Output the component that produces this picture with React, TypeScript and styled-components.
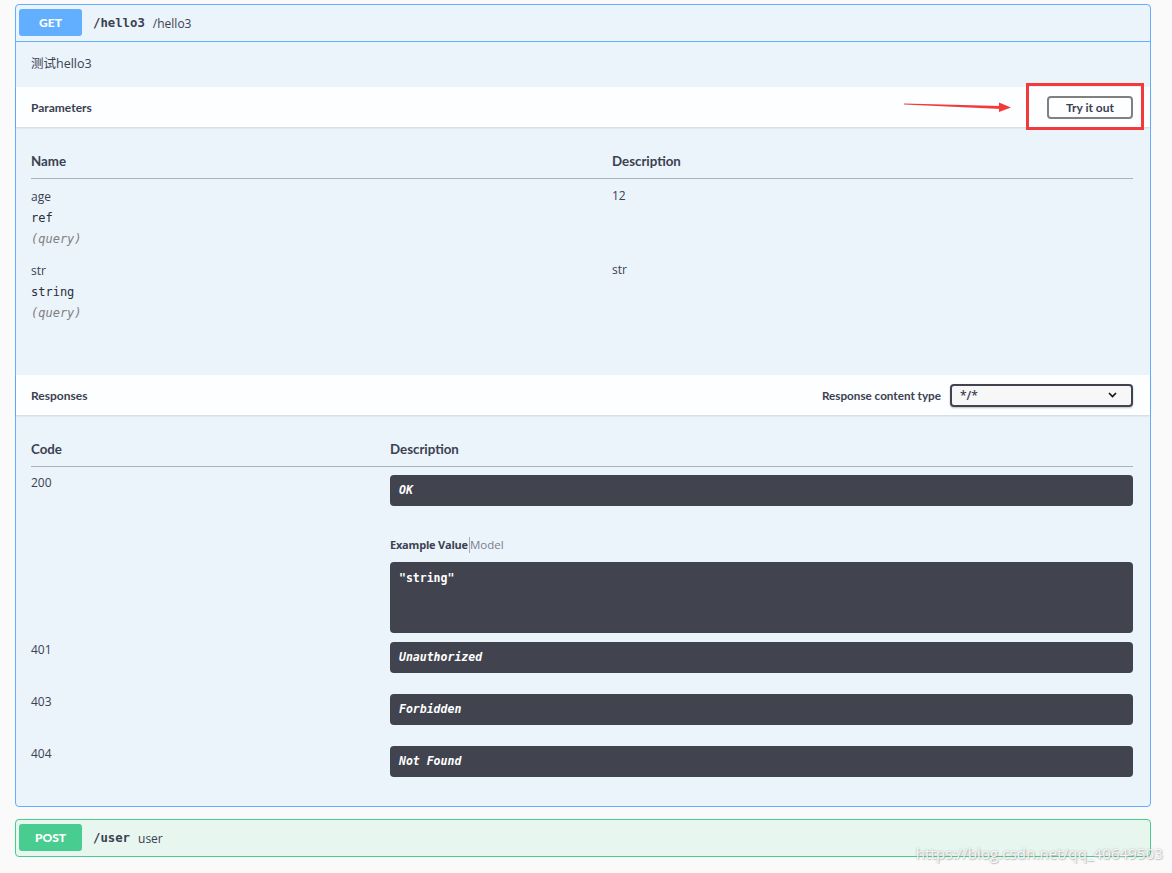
import React from 'react'
import styled, { createGlobalStyle } from 'styled-components'

const GlobalStyle = createGlobalStyle`
  html, body {
    margin: 0;
    padding: 0;
    background: #fafafa;
  }
  body {
    font-family: Lato, "Noto Sans", "Noto Sans CJK SC", sans-serif;
    color: #3b4151;
  }
`

const mono = `"DejaVu Sans Mono", "Liberation Mono", monospace`

const methods = {
  get: { border: '#61affe', bg: '#ebf3fb' },
  post: { border: '#49cc90', bg: '#e8f6f0' },
}

type Method = keyof typeof methods

const Page = styled.div`
  position: relative;
  height: 873px;
  padding: 4px 0 0 15px;
  box-sizing: border-box;
  width: 1172px;
`

const OpBlock = styled.div<{ $method: Method }>`
  width: 1136px;
  box-sizing: border-box;
  border: 1px solid ${(p) => methods[p.$method].border};
  border-radius: 4px;
  background: ${(p) => methods[p.$method].bg};
  margin-bottom: 12px;
`

const Summary = styled.div<{ $method: Method; $open?: boolean }>`
  display: flex;
  align-items: center;
  height: 36px;
  padding: 0 3px;
  border-bottom: ${(p) => (p.$open ? `1px solid ${methods[p.$method].border}` : 'none')};
`

const MethodBadge = styled.span<{ $method: Method }>`
  display: flex;
  align-items: center;
  justify-content: center;
  width: 63px;
  height: 27px;
  border-radius: 3px;
  background: ${(p) => methods[p.$method].border};
  color: #fff;
  font-size: 12px;
  font-weight: 900;
  margin-top: -1px;
`

const Path = styled.span`
  font-family: ${mono};
  font-size: 12.3px;
  font-weight: 600;
  color: #3b4151;
  margin-left: 11px;
`

const SummaryText = styled.span`
  font-family: "Open Sans", "Noto Sans", sans-serif;
  font-size: 12px;
  color: #3b4151;
  margin-left: 8px;
`

const Description = styled.div`
  height: 45px;
  box-sizing: border-box;
  padding: 0 0 4px 15px;
  display: flex;
  align-items: center;
  font-family: "Open Sans", "Noto Sans CJK SC", sans-serif;
  font-size: 12.5px;
`

const SectionHeader = styled.div`
  position: relative;
  display: flex;
  align-items: center;
  justify-content: space-between;
  height: 40px;
  padding: 0 17px 0 15px;
  background: rgba(255, 255, 255, 0.85);
  box-shadow: 0 1px 2px rgba(0, 0, 0, 0.12);
`

const SectionTitle = styled.h4`
  margin: 0;
  font-size: 12px;
  font-weight: 700;
  color: #3b4151;
`

const TryButton = styled.button`
  width: 86px;
  height: 23px;
  border: 2px solid #808080;
  border-radius: 4px;
  background: transparent;
  font-family: Lato, sans-serif;
  font-size: 12px;
  font-weight: 700;
  color: #3b4151;
  padding: 0;
`

const Highlight = styled.div`
  position: absolute;
  left: 1010px;
  top: -4px;
  width: 118px;
  height: 47px;
  box-sizing: border-box;
  border: 3px solid #f33a3a;
`

const Arrow = styled.svg`
  position: absolute;
  left: 888px;
  top: 14px;
`

const Section = styled.div<{ $top: number; $bottom: number }>`
  padding: ${(p) => p.$top}px 17px ${(p) => p.$bottom}px 15px;
`

const Table = styled.table`
  width: 100%;
  border-collapse: collapse;
`

const Th = styled.th<{ $width?: number }>`
  text-align: left;
  font-size: 13.3px;
  font-weight: 700;
  line-height: 16px;
  padding: 13px 0 9px;
  border-bottom: 1px solid rgba(59, 65, 81, 0.2);
  width: ${(p) => (p.$width ? `${p.$width}px` : 'auto')};
`

const Td = styled.td<{ $pad: string }>`
  vertical-align: top;
  padding: ${(p) => p.$pad};
  font-family: "Open Sans", "Noto Sans", sans-serif;
  font-size: 12px;
  line-height: 16px;
  color: #3b4151;
`

const ParamName = styled.div`
  font-weight: 400;
`

const ParamType = styled.div`
  font-family: ${mono};
  font-size: 12px;
  font-weight: 400;
  color: #2a2f3c;
  padding: 5px 0;
`

const ParamIn = styled.div`
  font-family: ${mono};
  font-size: 12px;
  font-style: italic;
  color: #808080;
`

const SelectBox = styled.div`
  display: flex;
  align-items: center;
  gap: 9px;
`

const SelectLabel = styled.span`
  font-size: 11.7px;
  font-weight: 700;
`

const Select = styled.div`
  display: flex;
  align-items: center;
  justify-content: space-between;
  width: 183px;
  height: 23px;
  box-sizing: border-box;
  border: 2px solid #41444e;
  border-radius: 4px;
  background: #f7f7f7;
  box-shadow: 0 1px 2px rgba(0, 0, 0, 0.25);
  padding: 0 14px 0 8px;
  font-family: "Open Sans", sans-serif;
  font-size: 12px;
  font-weight: 600;
`

const DarkBox = styled.div<{ $tall?: boolean }>`
  background: #41444e;
  border-radius: 4px;
  color: #fff;
  font-family: ${mono};
  font-size: 11.5px;
  font-weight: 700;
  line-height: 15px;
  padding: ${(p) => (p.$tall ? '9px 9px' : '8px 9px')};
  height: ${(p) => (p.$tall ? '71px' : '31px')};
  box-sizing: border-box;
  font-style: ${(p) => (p.$tall ? 'normal' : 'italic')};
  margin-bottom: ${(p) => (p.$tall ? '1px' : '13px')};
`

const ExampleTabs = styled.div`
  display: flex;
  align-items: center;
  margin: 31px 0 9px;
  font-size: 11px;
  line-height: 16px;
`

const TabActive = styled.span`
  font-weight: 700;
  letter-spacing: -0.2px;
  padding-right: 1px;
  border-right: 1px solid rgba(59, 65, 81, 0.4);
`

const TabInactive = styled.span`
  color: #7a7f8c;
  font-family: "Open Sans", sans-serif;
  font-size: 11.5px;
`

const Watermark = styled.div`
  position: absolute;
  right: 9px;
  bottom: 10px;
  font-family: "Open Sans", sans-serif;
  font-size: 15px;
  color: rgba(255, 255, 255, 0.9);
  text-shadow: 0 0 2px rgba(120, 120, 120, 0.6), 1px 1px 1px rgba(140, 140, 140, 0.4);
  letter-spacing: 0.1px;
`

const params = [
  { name: 'age', type: 'ref', desc: '12' },
  { name: 'str', type: 'string', desc: 'str' },
]

const responses = [
  { code: '200', desc: 'OK', example: '"string"' },
  { code: '401', desc: 'Unauthorized' },
  { code: '403', desc: 'Forbidden' },
  { code: '404', desc: 'Not Found' },
]

export default function App() {
  return (
    <Page>
      <GlobalStyle />
      <OpBlock $method='get'>
        <Summary $method='get' $open>
          <MethodBadge $method='get'>GET</MethodBadge>
          <Path>/hello3</Path>
          <SummaryText>/hello3</SummaryText>
        </Summary>
        <Description>测试hello3</Description>

        <SectionHeader>
          <SectionTitle>Parameters</SectionTitle>
          <TryButton>Try it out</TryButton>
          <Arrow width='110' height='12' viewBox='0 0 110 12'>
            <polygon points='0,2.4 97,5 97,8 0,3.4' fill='#f33a3a' />
            <polygon points='95,1.5 107,6.6 95,11' fill='#f33a3a' />
          </Arrow>
          <Highlight />
        </SectionHeader>
        <Section $top={13} $bottom={48}>
          <Table>
            <thead>
              <tr>
                <Th $width={581}>Name</Th>
                <Th>Description</Th>
              </tr>
            </thead>
            <tbody>
              {params.map((p) => (
                <tr key={p.name}>
                  <Td $pad='10px 0 6px'>
                    <ParamName>{p.name}</ParamName>
                    <ParamType>{p.type}</ParamType>
                    <ParamIn>(query)</ParamIn>
                  </Td>
                  <Td $pad='9px 0 6px'>{p.desc}</Td>
                </tr>
              ))}
            </tbody>
          </Table>
        </Section>

        <SectionHeader>
          <SectionTitle>Responses</SectionTitle>
          <SelectBox>
            <SelectLabel>Response content type</SelectLabel>
            <Select>
              <span>*/*</span>
              <svg width='9' height='6' viewBox='0 0 9 6'>
                <path d='M1 1l3.5 3.5L8 1' fill='none' stroke='#111' strokeWidth='1.6' />
              </svg>
            </Select>
          </SelectBox>
        </SectionHeader>
        <Section $top={13} $bottom={16}>
          <Table>
            <thead>
              <tr>
                <Th $width={359}>Code</Th>
                <Th>Description</Th>
              </tr>
            </thead>
            <tbody>
              {responses.map((r) => (
                <tr key={r.code}>
                  <Td $pad='8px 0 0'>{r.code}</Td>
                  <Td $pad='8px 0 0'>
                    <DarkBox>{r.desc}</DarkBox>
                    {r.example && (
                      <>
                        <ExampleTabs>
                          <TabActive>Example Value</TabActive>
                          <TabInactive>Model</TabInactive>
                        </ExampleTabs>
                        <DarkBox $tall>{r.example}</DarkBox>
                      </>
                    )}
                  </Td>
                </tr>
              ))}
            </tbody>
          </Table>
        </Section>
      </OpBlock>

      <OpBlock $method='post'>
        <Summary $method='post'>
          <MethodBadge $method='post'>POST</MethodBadge>
          <Path>/user</Path>
          <SummaryText>user</SummaryText>
        </Summary>
      </OpBlock>

      <Watermark>https://blog.csdn.net/qq_40649503</Watermark>
    </Page>
  )
}
